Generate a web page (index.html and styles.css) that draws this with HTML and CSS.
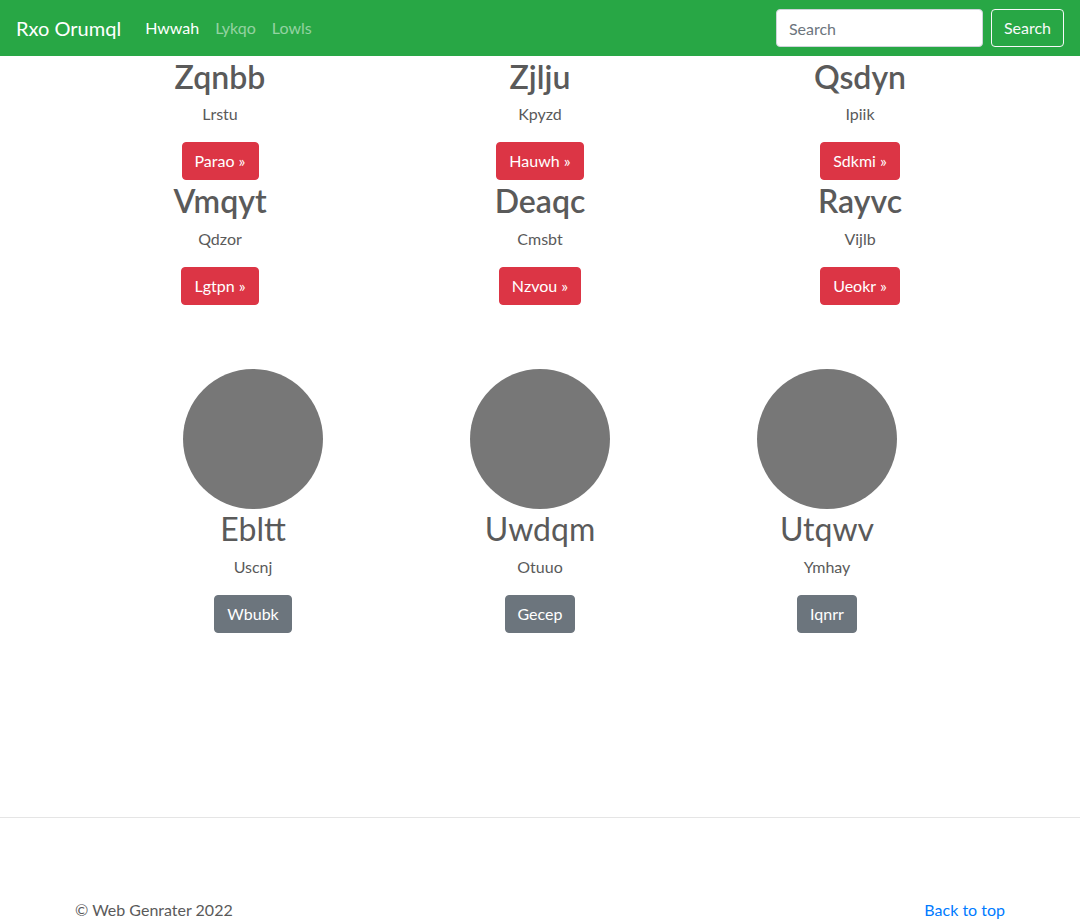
FILE: index.html
```html
<!DOCTYPE html>
<html lang="en">
<head>
<meta charset="utf-8">
<title>Rxo Orumql</title>
<link rel="stylesheet" href="styles.css">
</head>
<body>
<header class="navbar">
  <a class="brand" href="#">Rxo Orumql</a>
  <nav class="nav">
    <a class="nav-link active" href="#">Hwwah</a>
    <a class="nav-link" href="#">Lykqo</a>
    <a class="nav-link" href="#">Lowls</a>
  </nav>
  <form class="search">
    <input class="search-input" type="text" placeholder="Search">
    <button class="btn btn-outline-light" type="button">Search</button>
  </form>
</header>

<main>
  <section class="container">
    <div class="row">
      <div class="col">
        <h2 class="title">Zqnbb</h2>
        <p class="text">Lrstu</p>
        <a class="btn btn-danger" href="#">Parao &raquo;</a>
      </div>
      <div class="col">
        <h2 class="title">Zjlju</h2>
        <p class="text">Kpyzd</p>
        <a class="btn btn-danger" href="#">Hauwh &raquo;</a>
      </div>
      <div class="col">
        <h2 class="title">Qsdyn</h2>
        <p class="text">Ipiik</p>
        <a class="btn btn-danger" href="#">Sdkmi &raquo;</a>
      </div>
    </div>
    <div class="row">
      <div class="col">
        <h2 class="title">Vmqyt</h2>
        <p class="text">Qdzor</p>
        <a class="btn btn-danger" href="#">Lgtpn &raquo;</a>
      </div>
      <div class="col">
        <h2 class="title">Deaqc</h2>
        <p class="text">Cmsbt</p>
        <a class="btn btn-danger" href="#">Nzvou &raquo;</a>
      </div>
      <div class="col">
        <h2 class="title">Rayvc</h2>
        <p class="text">Vijlb</p>
        <a class="btn btn-danger" href="#">Ueokr &raquo;</a>
      </div>
    </div>
  </section>

  <section class="team">
    <div class="member">
      <svg class="avatar" width="140" height="140" viewBox="0 0 140 140" aria-hidden="true"><circle cx="70" cy="70" r="70" fill="#777"/></svg>
      <h2 class="name">Ebltt</h2>
      <p class="text">Uscnj</p>
      <a class="btn btn-secondary" href="#">Wbubk</a>
    </div>
    <div class="member">
      <svg class="avatar" width="140" height="140" viewBox="0 0 140 140" aria-hidden="true"><circle cx="70" cy="70" r="70" fill="#777"/></svg>
      <h2 class="name">Uwdqm</h2>
      <p class="text">Otuuo</p>
      <a class="btn btn-secondary" href="#">Gecep</a>
    </div>
    <div class="member">
      <svg class="avatar" width="140" height="140" viewBox="0 0 140 140" aria-hidden="true"><circle cx="70" cy="70" r="70" fill="#777"/></svg>
      <h2 class="name">Utqwv</h2>
      <p class="text">Ymhay</p>
      <a class="btn btn-secondary" href="#">Iqnrr</a>
    </div>
  </section>

  <hr class="divider">

  <footer class="footer">
    <p class="copy">&copy; Web Genrater 2022</p>
    <a class="top-link" href="#">Back to top</a>
  </footer>
</main>
</body>
</html>
```

FILE: styles.css
```css
* { box-sizing: border-box; }

html, body {
  margin: 0;
  padding: 0;
}

body {
  font-family: Lato, "Noto Sans", "Liberation Sans", sans-serif;
  font-size: 16px;
  line-height: 1.5;
  color: #5a5a5a;
  background: #fff;
}

a { text-decoration: none; }

/* Navbar */
.navbar {
  display: flex;
  align-items: center;
  height: 56px;
  padding: 8px 16px;
  background: #28a745;
}

.brand {
  font-size: 20px;
  line-height: 30px;
  padding: 5px 0;
  margin-right: 16px;
  color: #fff;
}

.nav {
  display: flex;
  flex: 1;
}

.nav-link {
  padding: 8px;
  color: rgba(255, 255, 255, 0.5);
  line-height: 24px;
}

.nav-link.active {
  color: #fff;
}

.search {
  display: flex;
  align-items: center;
}

.search-input {
  width: 207px;
  height: 38px;
  margin-right: 8px;
  padding: 6px 12px;
  font: inherit;
  color: #495057;
  background: #fff;
  border: 1px solid #ced4da;
  border-radius: 4px;
}

.search-input::placeholder {
  color: #6c757d;
}

/* Buttons */
.btn {
  display: inline-block;
  height: 38px;
  padding: 6px 12px;
  font: inherit;
  line-height: 24px;
  border: 1px solid transparent;
  border-radius: 4px;
  cursor: pointer;
}

.btn-outline-light {
  color: #f8f9fa;
  background: transparent;
  border-color: #f8f9fa;
}

.btn-danger {
  color: #fff;
  background: #dc3545;
  border-color: #dc3545;
}

.btn-secondary {
  color: #fff;
  background: #6c757d;
  border-color: #6c757d;
}

/* Content */
.container {
  width: 960px;
  margin: 0 auto;
  padding: 0 15px;
}

.row {
  display: flex;
  margin: 0 -15px;
}

.col {
  flex: 1;
  padding: 0 15px;
  text-align: center;
}

.title {
  margin: 0 0 6px;
  padding-top: 2px;
  font-size: 32px;
  line-height: 1.2;
  font-weight: 600;
}

.text {
  margin: 0 0 16px;
}

/* Team */
.team {
  display: flex;
  justify-content: center;
  margin-top: 64px;
}

.member {
  width: 287px;
  display: flex;
  flex-direction: column;
  align-items: center;
  text-align: center;
}

.avatar {
  display: block;
}

.name {
  margin: 0 0 7px;
  padding-top: 1px;
  font-size: 32px;
  line-height: 1.2;
  font-weight: 400;
}

/* Footer */
.divider {
  margin: 184px 0 80px;
  border: 0;
  border-top: 1px solid rgba(0, 0, 0, 0.1);
}

.footer {
  width: 960px;
  margin: 0 auto;
  padding: 0 15px;
  display: flex;
  justify-content: space-between;
}

.copy {
  margin: 0 0 16px;
}

.top-link {
  color: #007bff;
  line-height: 24px;
}
```
